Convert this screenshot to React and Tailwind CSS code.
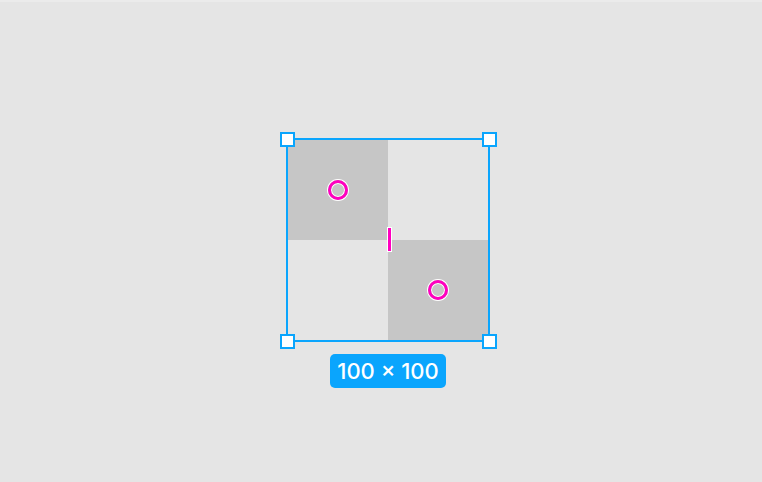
export default function App() {
  const handle = "absolute w-[15px] h-[15px] bg-white border-2 border-[#0aa5fd]";
  const dot = "w-[20px] h-[20px] rounded-full border-[3px] border-[#ff00bf] ring-1 ring-white shadow-[inset_0_0_0_1px_white]";
  return (
    <div className="w-[762px] h-[482px] bg-[#e5e5e5] border-t-2 border-[#ebebeb] overflow-hidden" style={{ fontFamily: "Inter, 'Open Sans', sans-serif" }}>
      <div className="flex flex-col items-center w-[204px] ml-[286px] mt-[136px]">
        <div className="relative w-[204px] h-[204px] border-2 border-[#0aa5fd] grid grid-cols-2 grid-rows-2">
          <div className="bg-[#c6c6c6] flex items-center justify-center">
            <div className={dot}></div>
          </div>
          <div></div>
          <div></div>
          <div className="bg-[#c6c6c6] flex items-center justify-center">
            <div className={dot}></div>
          </div>
          <div className="absolute left-[99px] top-[87px] w-[5px] h-[25px] bg-white flex justify-center items-center">
            <div className="w-[3px] h-[23px] bg-[#ff00bf]"></div>
          </div>
          <div className={handle + " -left-[8px] -top-[8px]"}></div>
          <div className={handle + " -right-[9px] -top-[8px]"}></div>
          <div className={handle + " -left-[8px] -bottom-[9px]"}></div>
          <div className={handle + " -right-[9px] -bottom-[9px]"}></div>
        </div>
        <div className="mt-[12px] h-[34px] w-[116px] rounded-[5px] bg-[#0aa5fd] text-white text-[22px] font-medium flex items-center justify-center leading-none whitespace-nowrap">
          100 × 100
        </div>
      </div>
    </div>
  );
}
